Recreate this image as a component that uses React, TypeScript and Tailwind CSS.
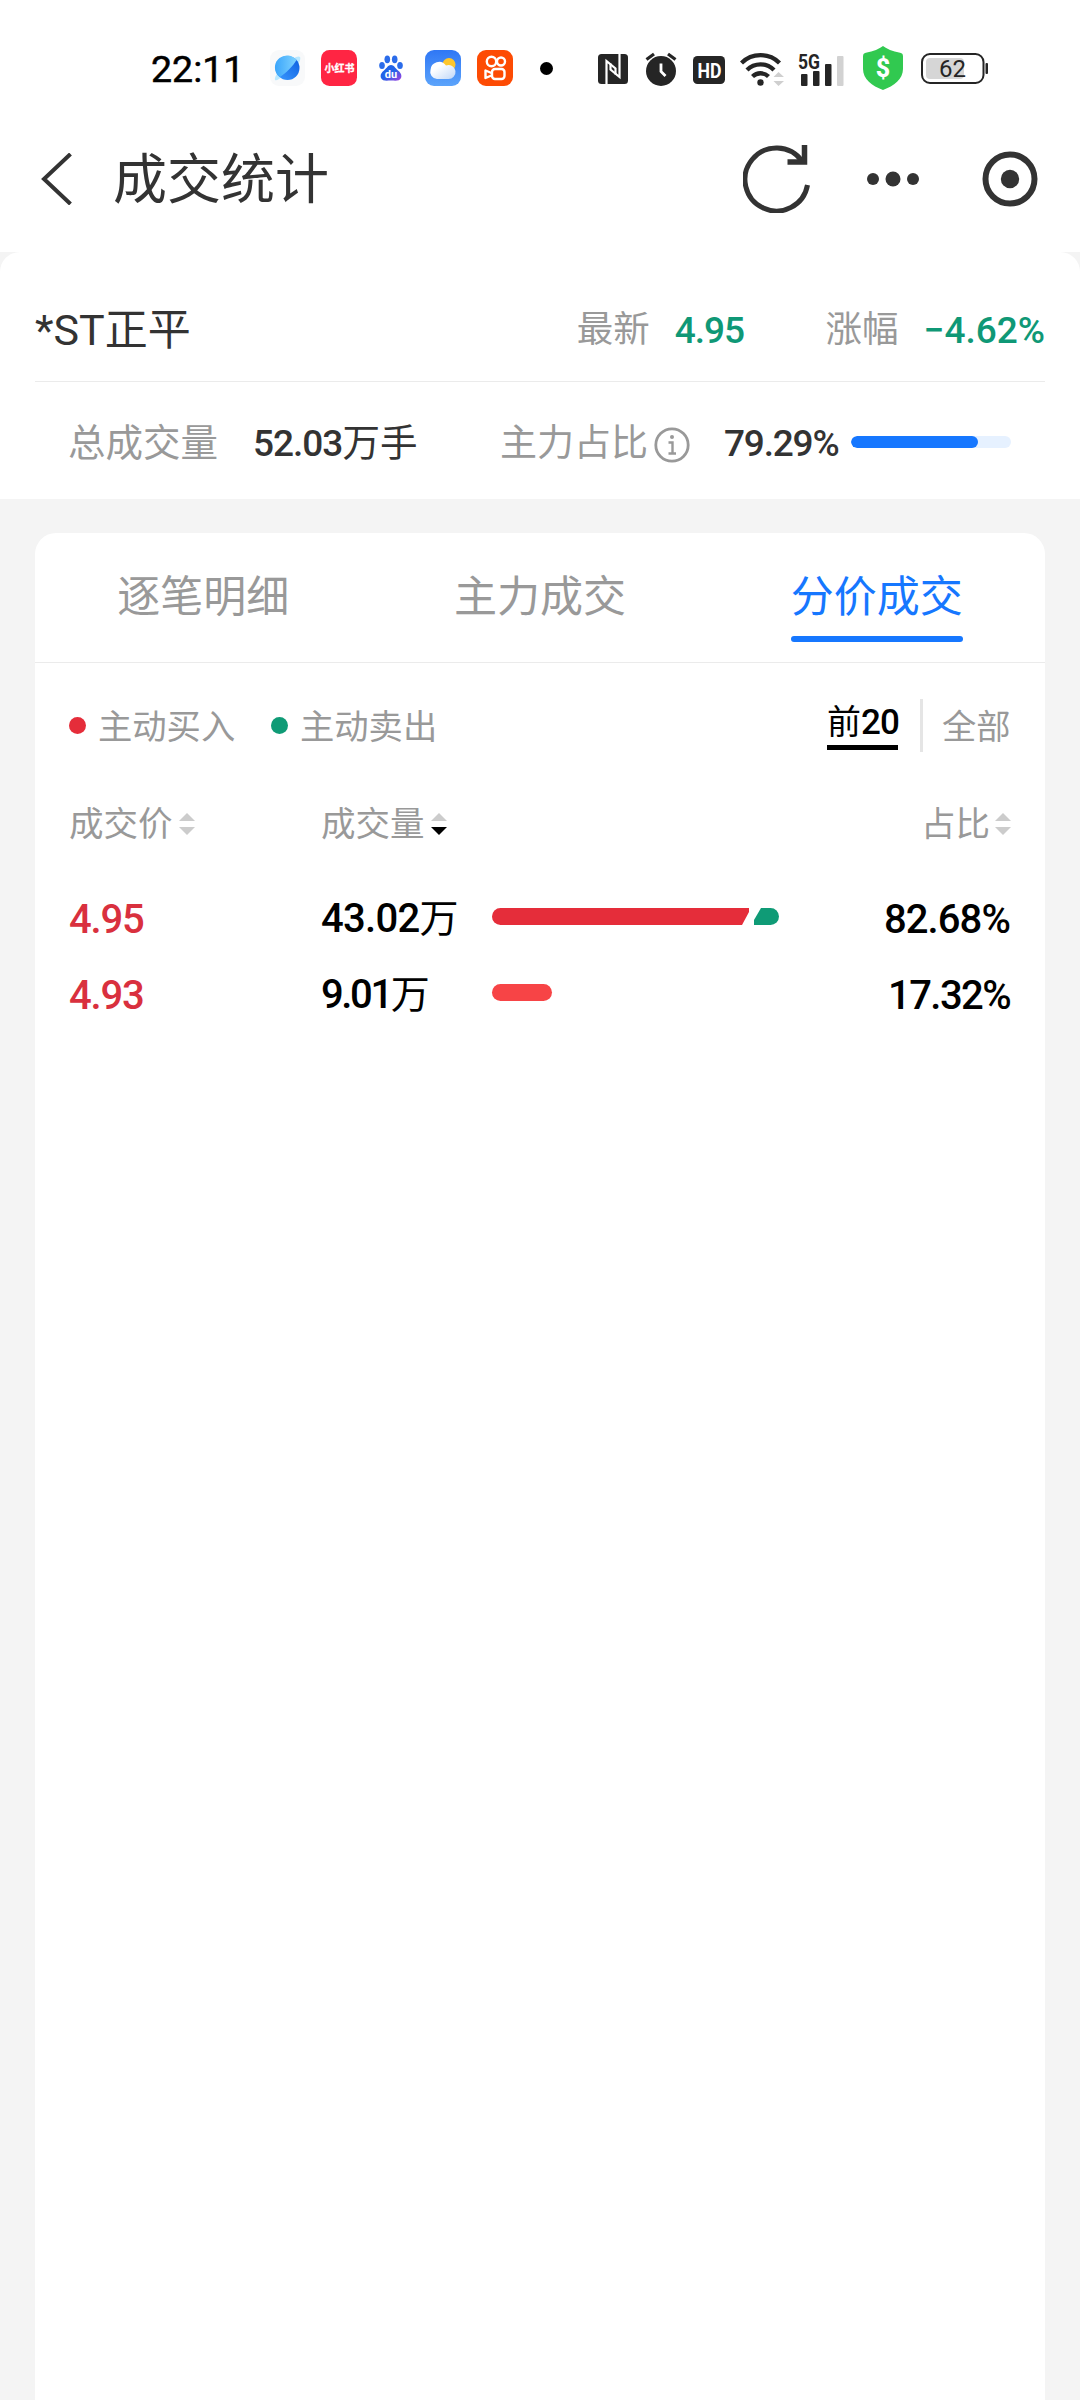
import { useState } from 'react'

const quote = { name: '*ST正平', price: '4.95', change: '−4.62%', volume: '52.03', mainRatio: '79.29%' };

const tabs = ['逐笔明细', '主力成交', '分价成交'];

const rows = [
    { price: '4.95', volume: '43.02', ratio: '82.68%' },
    { price: '4.93', volume: '9.01', ratio: '17.32%' },
];

function StatusBar() {
    return (
        <div className="flex h-[136px] items-center pl-[151px]">
            <span className="w-[119px] pt-[2px] text-[37.500px] leading-[40px] text-black [-webkit-text-stroke:0.5px_#000]">22:11</span>
            <svg className="mr-[16px] shrink-0" width="35" height="36" viewBox="0 0 35 36">
                <defs>
                    <linearGradient id="globeTop" x1="0" y1="0" x2="1" y2="0">
                        <stop offset="0" stopColor="#3aa5fb" />
                        <stop offset="1" stopColor="#7ed2ff" />
                    </linearGradient>
                    <linearGradient id="globeBottom" x1="0" y1="1" x2="1" y2="0">
                        <stop offset="0" stopColor="#3d9bff" />
                        <stop offset="1" stopColor="#0a5cdf" />
                    </linearGradient>
                </defs>
                <rect width="35" height="36" rx="9" fill="#f8f9fa" />
                <path d="M5 30 C4 27 8 21 16 14 C22 9 28 5 30 7 C31 9 29 13 28 15 L9 29 Q6 31 5 30Z" fill="#b9e8ff" />
                <circle cx="17.500" cy="18" r="12" fill="url(#globeBottom)" />
                <path d="M7.500 25 A12 12 0 0 1 26.500 10 C23 16 16 23 10 27Z" fill="url(#globeTop)" />
            </svg>
            <svg className="mr-[22px] shrink-0" width="36" height="36" viewBox="0 0 36 36">
                <rect width="36" height="36" rx="8.500" fill="#ff2543" />
                <text x="3.500" y="22" fontSize="10" fontWeight="700" fill="#fff" stroke="#fff" strokeWidth="0.300">小红书</text>
            </svg>
            <svg className="mr-[22px] shrink-0" width="24" height="26" viewBox="0 0 24 26">
                <defs>
                    <linearGradient id="paw" x1="0" y1="0" x2="1" y2="1">
                        <stop offset="0.500" stopColor="#2264e8" />
                        <stop offset="1" stopColor="#a63fe0" />
                    </linearGradient>
                </defs>
                <ellipse cx="3" cy="10.500" rx="2.800" ry="3.600" fill="#2b6cea" />
                <ellipse cx="8.300" cy="4.300" rx="2.800" ry="3.900" fill="#2b6cea" />
                <ellipse cx="15.700" cy="4.300" rx="2.800" ry="3.900" fill="#2b6cea" />
                <ellipse cx="21" cy="10.500" rx="2.800" ry="3.600" fill="#2b6cea" />
                <path d="M12 10 C15 10 16 13 19 15.500 C22 18 23 20 22 23 C20.500 26.500 16 25.500 12 25.500 C8 25.500 3.500 26.500 2 23 C1 20 2 18 5 15.500 C8 13 9 10 12 10Z" fill="url(#paw)" />
                <text x="12" y="23" textAnchor="middle" fontSize="11" fontWeight="700" fill="#fff">du</text>
            </svg>
            <svg className="mr-[16px] shrink-0" width="36" height="36" viewBox="0 0 36 36">
                <defs>
                    <linearGradient id="sky" x1="0" y1="0" x2="0" y2="1">
                        <stop offset="0" stopColor="#2f77f5" />
                        <stop offset="1" stopColor="#5ca4fb" />
                    </linearGradient>
                    <linearGradient id="cloud" x1="0" y1="0" x2="1" y2="1">
                        <stop offset="0.300" stopColor="#fff" />
                        <stop offset="1" stopColor="#bfd7f8" />
                    </linearGradient>
                </defs>
                <rect width="36" height="36" rx="9" fill="url(#sky)" />
                <circle cx="24" cy="14.500" r="6.500" fill="#fdc62c" />
                <path d="M12 29 A7 7 0 0 1 5.500 20 A8.500 8.500 0 0 1 21 15.500 A7 7 0 1 1 23 29Z" fill="url(#cloud)" />
            </svg>
            <svg className="mr-[27px] shrink-0" width="36" height="36" viewBox="0 0 36 36" fill="none" stroke="#fff" strokeWidth="2.400">
                <rect width="36" height="36" rx="9" fill="#fd4b04" stroke="none" />
                <circle cx="14.500" cy="11.500" r="4.700" />
                <circle cx="24" cy="11.500" r="4" />
                <rect x="15" y="19" width="12.500" height="10" rx="3" />
                <path d="M14.500 23 L8.500 20.500 V28 L14.500 25.500" strokeLinejoin="round" />
            </svg>
            <div className="mr-[45px] size-[13px] shrink-0 rounded-full bg-black"></div>
            <svg className="mr-[17px] mt-[2px] shrink-0" width="30" height="30" viewBox="0 0 30 30">
                <rect width="30" height="30" rx="3.500" fill="#252525" />
                <path d="M8.500 30 V7 L17.500 14.500 V20.500" fill="none" stroke="#fff" strokeWidth="2.200" />
                <path d="M21.500 0 V23 L12.500 15.500 V9.500" fill="none" stroke="#fff" strokeWidth="2.200" />
            </svg>
            <svg className="mr-[16px] mt-[2px] shrink-0" width="32" height="34" viewBox="0 0 32 34">
                <circle cx="16" cy="19" r="15" fill="#252525" />
                <path d="M1.500 7.500 L9 2 M30.500 7.500 L23 2" stroke="#252525" strokeWidth="3.200" />
                <path d="M16 11.500 V19.500 L20.500 24" fill="none" stroke="#fff" strokeWidth="2.800" />
            </svg>
            <svg className="mr-[15px] mt-[4px] shrink-0" width="32" height="28" viewBox="0 0 32 28">
                <rect width="32" height="28" rx="4.500" fill="#252525" />
                <text x="4.500" y="21.500" fontSize="21" fontWeight="700" fill="#fff" textLength="24" lengthAdjust="spacingAndGlyphs">HD</text>
            </svg>
            <svg className="mr-[13px] mt-[1px] shrink-0" width="45" height="34" viewBox="0 0 45 34">
                <g fill="none" stroke="#252525" strokeWidth="4.300">
                    <path d="M1.500 11 A27 27 0 0 1 39.500 11" />
                    <path d="M7 18 A19 19 0 0 1 34 18" />
                    <path d="M12.500 24.500 A11.500 11.500 0 0 1 28.500 24.500" />
                </g>
                <circle cx="20.500" cy="30.500" r="3.200" fill="#252525" />
                <path d="M33.500 25 L38.500 20 L44 25Z M33.500 29 L38.500 34 L44 29Z" fill="#cfcfcf" />
            </svg>
            <svg className="-mt-[4px] mr-[18px] shrink-0" width="47" height="40" viewBox="0 -5 47 40">
                <rect x="3" y="23" width="6.500" height="12" rx="1" fill="#252525" />
                <rect x="15" y="20" width="6.500" height="15" rx="1" fill="#252525" />
                <rect x="27" y="13" width="6.500" height="22" rx="1" fill="#252525" />
                <rect x="39" y="5" width="6.500" height="30" rx="1" fill="#d2d2d2" />
                <text x="0" y="17.500" fontSize="20" fontWeight="700" fill="#252525" textLength="22" lengthAdjust="spacingAndGlyphs">5G</text>
            </svg>
            <svg className="mr-[18px] shrink-0" width="40" height="44" viewBox="0 0 40 44">
                <path d="M20 0 C26 4.500 33 6 38 7 Q40 7.500 40 10 V23 C40 33 31 40 20 44 C9 40 0 33 0 23 V10 Q0 7.500 2 7 C7 6 14 4.500 20 0Z" fill="#31c950" />
                <text x="20" y="30.500" textAnchor="middle" fontSize="25" fontWeight="800" fill="#fff">$</text>
            </svg>
            <svg className="mt-[1px] shrink-0" width="68" height="31" viewBox="0 0 68 31">
                <rect x="5" y="5" width="38" height="21" rx="4" fill="#d6d6d6" />
                <rect x="1" y="1" width="61.500" height="29" rx="8" fill="none" stroke="#252525" strokeWidth="2" />
                <rect x="64.500" y="10" width="2.500" height="11" rx="1" fill="#252525" />
                <text x="31.500" y="24" textAnchor="middle" fontSize="24" fill="#252525">62</text>
            </svg>
        </div>
    )
}

function Header() {
    return (
        <header className="mb-[30px] flex h-[86px] items-center pl-[40px] text-[#333]">
            <svg className="mr-[41px]" width="32" height="52" viewBox="0 0 32 52" fill="none" stroke="currentColor" strokeWidth="4">
                <path d="M30.500 1 L4 26 L30.500 51" />
            </svg>
            <h1 className="w-[630px] pt-[4px] text-[54px] leading-[60px]">成交统计</h1>
            <svg className="mr-[56px]" width="68" height="68" viewBox="0 0 68 68" fill="none" stroke="currentColor" strokeWidth="5">
                <path d="M59 16 A31.500 31.500 0 1 0 64.500 40" />
                <path d="M61.500 0 V17 H44.500" strokeWidth="5.500" />
            </svg>
            <svg className="mr-[63px]" width="52" height="16" viewBox="0 0 52 16" fill="currentColor">
                <circle cx="6" cy="8" r="6" />
                <circle cx="26" cy="8" r="7.500" />
                <circle cx="46" cy="8" r="6" />
            </svg>
            <svg width="56" height="56" viewBox="0 0 56 56" fill="none" stroke="currentColor" strokeWidth="6">
                <circle cx="28" cy="28" r="24.500" />
                <circle cx="28" cy="28" r="9.200" fill="currentColor" stroke="none" />
            </svg>
        </header>
    )
}

function SortIcon({ active = false }: { active?: boolean }) {
    return (
        <svg className="shrink-0" width="16" height="22" viewBox="0 0 16 22">
            <path d="M0 8 L8 0 L16 8Z" fill="#ccc" />
            <path d="M0 14 L8 22 L16 14Z" fill={active ? '#000' : '#ccc'} />
        </svg>
    )
}

function Summary() {
    return (
        <section className="bg-[#f4f4f4]">
            <div className="h-[247px] rounded-t-[20px] bg-white px-[35px]">
                <div className="flex h-[130px] items-center border-b-[1px] border-[#ebebeb] pt-[27px] text-[37px] leading-[44px]">
                    <span className="w-[542px] text-[43px] text-[#333]">{quote.name}</span>
                    <span className="w-[98px] text-[36.500px] text-[#999]">最新</span>
                    <span className="w-[151px] pt-[1px] font-medium tracking-[-1px] text-[#0f9876]">{quote.price}</span>
                    <span className="w-[98px] text-[36.500px] text-[#999]">涨幅</span>
                    <span className="whitespace-nowrap pt-[1px] font-medium text-[#0f9876]">{quote.change}</span>
                </div>
                <div className="flex h-[117px] items-center pl-[33px] pt-[4px] text-[37px] leading-[44px] text-[#333]">
                    <span className="w-[185px] pt-[1px] text-[37.500px] text-[#999]">总成交量</span>
                    <span className="w-[247px] whitespace-nowrap pt-[2px]">
                        <b className="font-medium tracking-[-1px]">{quote.volume}</b>
                        <span className="text-[37.500px]">万手</span>
                    </span>
                    <span className="w-[154px] whitespace-nowrap pt-[2px] text-[37px] text-[#999]">主力占比</span>
                    <svg className="mr-[34px] mt-[4px] shrink-0" width="36" height="36" viewBox="0 0 36 36" fill="none" stroke="#999" strokeWidth="2.800">
                        <circle cx="18" cy="18" r="16.200" />
                        <path d="M14.500 15.500 H18.500 V26.500 M14.500 26.500 H22" strokeWidth="2.400" />
                        <circle cx="18" cy="10" r="2" fill="#999" stroke="none" />
                    </svg>
                    <span className="w-[127px] pt-[3px] font-medium tracking-[-1.2px]">{quote.mainRatio}</span>
                    <div className="-mt-[2px] h-[12px] w-[160px] overflow-hidden rounded-[6px] bg-[#e6f1ff]">
                        <div className="h-full w-[79.29%] rounded-[6px] bg-[#1677ff]"></div>
                    </div>
                </div>
            </div>
        </section>
    )
}

export default function App() {
    const [tab, setTab] = useState(2);

    return (
        <div className="flex h-[2400px] w-[1080px] flex-col overflow-hidden bg-white font-['Roboto','Noto_Sans_CJK_SC',sans-serif]">
            <StatusBar />
            <Header />
            <Summary />
            <main className="flex-1 bg-[#f4f4f4] px-[35px] pt-[34px]">
                <div className="h-full rounded-t-[21px] bg-white">
                    <ul className="flex h-[130px] border-b-[1px] border-[#ebebeb]">
                        {tabs.map((name, i) => (
                            <li key={name} className="flex flex-1 justify-center" onClick={() => setTab(i)}>
                                <span className={`h-[109px] pt-[37px] text-[43px] leading-[54px] ${i === tab ? 'text-[#1677ff]' : 'text-[#999]'}`}>
                                    {name}
                                    {i === tab && <i className="mt-[12px] block h-[6px] rounded-[3px] bg-[#1677ff]"></i>}
                                </span>
                            </li>
                        ))}
                    </ul>
                    <div className="flex h-[125px] items-center pl-[34px] pr-[34px] text-[34.300px] leading-[42px] text-[#999]">
                        <i className="mr-[12px] size-[17px] rounded-full bg-[#e52d3a]"></i>
                        <span className="w-[173px] pt-[2px]">主动买入</span>
                        <i className="mr-[12px] size-[17px] rounded-full bg-[#0f9b76]"></i>
                        <span className="pt-[2px]">主动卖出</span>
                        <span className="ml-auto w-[71px] whitespace-nowrap border-b-[5px] border-black pb-[1px] text-[34px] text-black">
                            前<b className="text-[35px] font-medium tracking-[-1px]">20</b>
                        </span>
                        <div className="ml-[22px] h-[53px] w-[3px] bg-[#e5e5e5]"></div>
                        <span className="ml-[19px] w-[69px] pt-[2px]">全部</span>
                    </div>
                    <div className="flex h-[71px] items-center pl-[34px] pr-[34px] text-[34.500px] leading-[42px] text-[#999]">
                        <div className="flex w-[252px] items-center gap-[6px]">成交价<SortIcon /></div>
                        <div className="flex items-center gap-[6px]">成交量<SortIcon active /></div>
                        <div className="ml-auto flex items-center gap-[5px]">占比<SortIcon /></div>
                    </div>
                    <ul className="pl-[34px] pr-[35px] pt-[19px]">
                        {rows.map((row, i) => (
                            <li key={row.price} className="flex h-[76px] items-center text-[40px] leading-[48px] text-black">
                                <span className="w-[252px] pt-[8px] font-medium tracking-[-1.2px] text-[#d9303e]">{row.price}</span>
                                <span className="w-[171px] whitespace-nowrap pt-[6px]">
                                    <b className={`font-medium ${row.volume.endsWith('1') ? 'tracking-[-2.4px]' : 'tracking-[-0.7px]'}`}>{row.volume}</b>
                                    <span className="text-[39px]">万</span>
                                </span>
                                {i === 0 ? (
                                    <svg width="288" height="17" viewBox="0 0 288 17">
                                        <path d="M8.500 0 H257 V4 L250 17 H8.500 A8.500 8.500 0 0 1 8.500 0Z" fill="#e52d3a" />
                                        <path d="M269 0 H278.500 A8.500 8.500 0 0 1 278.500 17 H262 V12Z" fill="#0f9b76" />
                                    </svg>
                                ) : (
                                    <div className="h-[17px] w-[60px] rounded-full bg-[#f74446]"></div>
                                )}
                                <span className={`ml-auto pt-[8px] font-medium ${row.ratio.startsWith('1') ? 'tracking-[-1.6px]' : 'tracking-[-0.9px]'}`}>{row.ratio}</span>
                            </li>
                        ))}
                    </ul>
                </div>
            </main>
        </div>
    )
}
